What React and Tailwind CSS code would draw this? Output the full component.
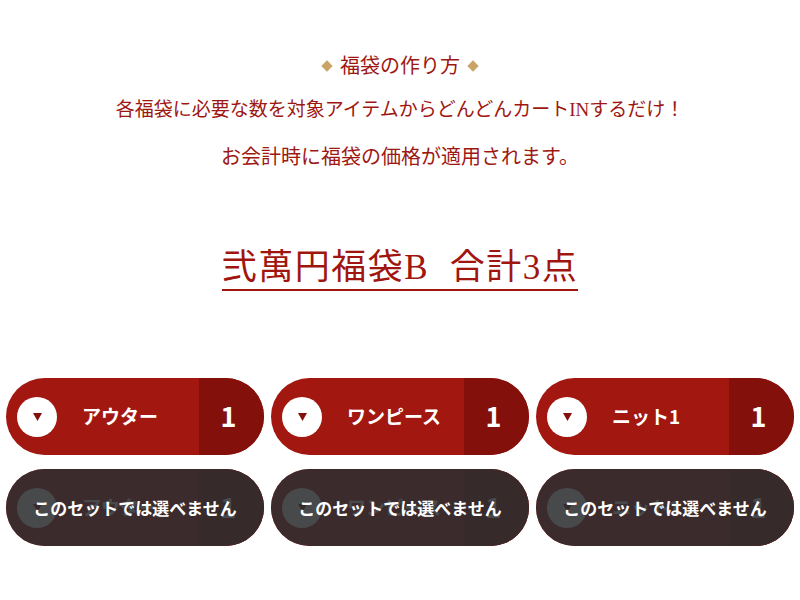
import React from 'react';

const serif = { fontFamily: '"Liberation Serif", "Noto Sans CJK JP", serif' };
const sans = { fontFamily: '"Noto Sans CJK JP", "Noto Sans", sans-serif' };

const items = [
  { label: 'アウター', count: 1 },
  { label: 'ワンピース', count: 1 },
  { label: 'ニット1', count: 1 },
];

const Diamond = () => (
  <span className="inline-block w-[8px] h-[8px] bg-[#c9a464] rotate-45" />
);

const Pill = ({ label, count }) => (
  <div className="relative flex h-[77px] rounded-full overflow-hidden bg-[#a21810] text-white" style={sans}>
    <div className="flex flex-1 items-center pl-[11px]">
      <div className="flex w-[40px] h-[40px] items-center justify-center rounded-full bg-white">
        <svg width="9" height="8" viewBox="0 0 9 8">
          <path d="M0 0h9L4.5 8z" fill="#84100c" />
        </svg>
      </div>
      <span className="ml-[25px] text-[19px] font-bold">{label}</span>
    </div>
    <div className="flex w-[65px] items-center justify-center pr-[6px] bg-[#84100c] text-[27px] font-bold">
      {count}
    </div>
  </div>
);

const DisabledPill = ({ label, count }) => (
  <div className="relative">
    <Pill label={label} count={count} />
    {/* disabled cover */}
    <div
      className="absolute inset-0 flex items-center justify-center rounded-full bg-[rgba(44,46,48,0.87)] text-white text-[17px] font-bold"
      style={sans}
    >
      このセットでは選べません
    </div>
  </div>
);

export default function App() {
  return (
    <div className="w-[800px] h-[600px] bg-white overflow-hidden">
      <div className="pt-[44px] text-center text-[20px] text-[#9e1812]" style={serif}>
        <p className="flex items-center justify-center gap-[9px] leading-[44px]">
          <Diamond />
          <span>福袋の作り方</span>
          <Diamond />
        </p>
        <p className="text-[19px] leading-[44px]">各福袋に必要な数を対象アイテムからどんどんカートINするだけ！</p>
        <p className="mt-[3px] leading-[44px]">お会計時に福袋の価格が適用されます。</p>
      </div>

      <div className="mt-[69px] flex justify-center">
        <h2
          className="inline-block text-[35px] leading-[40px] tracking-[1.5px] text-[#a0160f] border-b-2 border-[#a0160f] pb-[1px]"
          style={serif}
        >
          弐萬円福袋B&nbsp;&nbsp;合計3点
        </h2>
      </div>

      <div className="mt-[87px] grid grid-cols-3 gap-x-[7px] gap-y-[14px] px-[6px]">
        {items.map((it) => (
          <Pill key={it.label} label={it.label} count={it.count} />
        ))}
        {items.map((it) => (
          <DisabledPill key={'d' + it.label} label={it.label} count={it.count} />
        ))}
      </div>
    </div>
  );
}
